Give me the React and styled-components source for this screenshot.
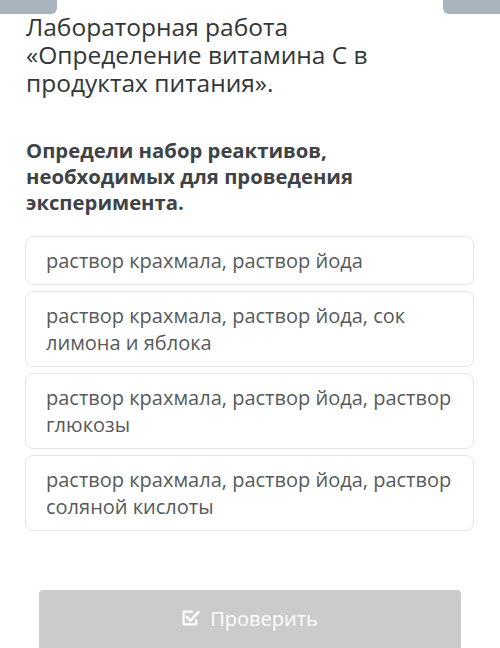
import React from "react"
import styled, { createGlobalStyle } from "styled-components"

const GlobalStyle = createGlobalStyle`
  html, body {
    margin: 0;
    padding: 0;
    background: #fff;
    font-family: "Open Sans", "Noto Sans", sans-serif;
  }
`

const Page = styled.div`
  width: 500px;
  height: 648px;
  overflow: hidden;
  background: #fff;
  display: flex;
  flex-direction: column;
`

const TopBar = styled.div`
  display: flex;
  justify-content: space-between;
  height: 14px;
`

const Tab = styled.div`
  width: 57px;
  height: 14px;
  background: #a8b4bd;
  border-bottom-left-radius: ${p => (p.side === "right" ? "6px" : "0")};
  border-bottom-right-radius: ${p => (p.side === "left" ? "6px" : "0")};
`

const Content = styled.div`
  padding: 0 26px 0 25px;
  display: flex;
  flex-direction: column;
`

const Title = styled.h1`
  margin: -1px 0 0 1px;
  font-size: 24.5px;
  font-weight: 400;
  line-height: 28px;
  color: #333638;
`

const Question = styled.h2`
  margin: 40px 0 0 1px;
  font-size: 20.3px;
  font-weight: 700;
  line-height: 26px;
  color: #3d4347;
`

const Options = styled.div`
  margin-top: 21px;
  display: flex;
  flex-direction: column;
  gap: 6px;
`

const Option = styled.div`
  border: 1px solid #e4e6e7;
  border-radius: 8px;
  padding: 10px 14px 10px 20px;
  font-size: 20px;
  line-height: 27px;
  color: #565a5c;
`

const Footer = styled.div`
  margin-top: auto;
  padding: 0 39px;
`

const CheckButton = styled.button`
  width: 100%;
  height: 58px;
  border: none;
  border-radius: 4px 4px 0 0;
  background: #cbcbcb;
  color: #fff;
  font-family: "Open Sans", "Noto Sans", sans-serif;
  font-size: 20px;
  display: flex;
  align-items: center;
  justify-content: center;
  gap: 10px;
  padding: 0 0 2px 0;
`

const CheckIcon = () => (
  <svg width="18" height="18" viewBox="0 0 17 17" fill="none" stroke="#fff" strokeWidth="2">
    <path d="M13.5 9.5v5h-12v-12h9" strokeLinejoin="round" />
    <path d="M4.5 7.5l3.5 3.5 7.5-8" strokeLinecap="round" strokeLinejoin="round" strokeWidth="2.4" />
  </svg>
)

const answers = [
  "раствор крахмала, раствор йода",
  "раствор крахмала, раствор йода, сок лимона и яблока",
  "раствор крахмала, раствор йода, раствор глюкозы",
  "раствор крахмала, раствор йода, раствор соляной кислоты",
]

const App = () => (
  <>
    <GlobalStyle />
    <Page>
      <TopBar>
        <Tab side="left" />
        <Tab side="right" />
      </TopBar>
      <Content>
        <Title>
          Лабораторная работа<br />
          «Определение витамина С в<br />
          продуктах питания».
        </Title>
        <Question>
          Определи набор реактивов,<br />
          необходимых для проведения<br />
          эксперимента.
        </Question>
        <Options>
          {answers.map(a => (
            <Option key={a}>{a}</Option>
          ))}
        </Options>
      </Content>
      <Footer>
        <CheckButton>
          <CheckIcon />
          Проверить
        </CheckButton>
      </Footer>
    </Page>
  </>
)

export default App
